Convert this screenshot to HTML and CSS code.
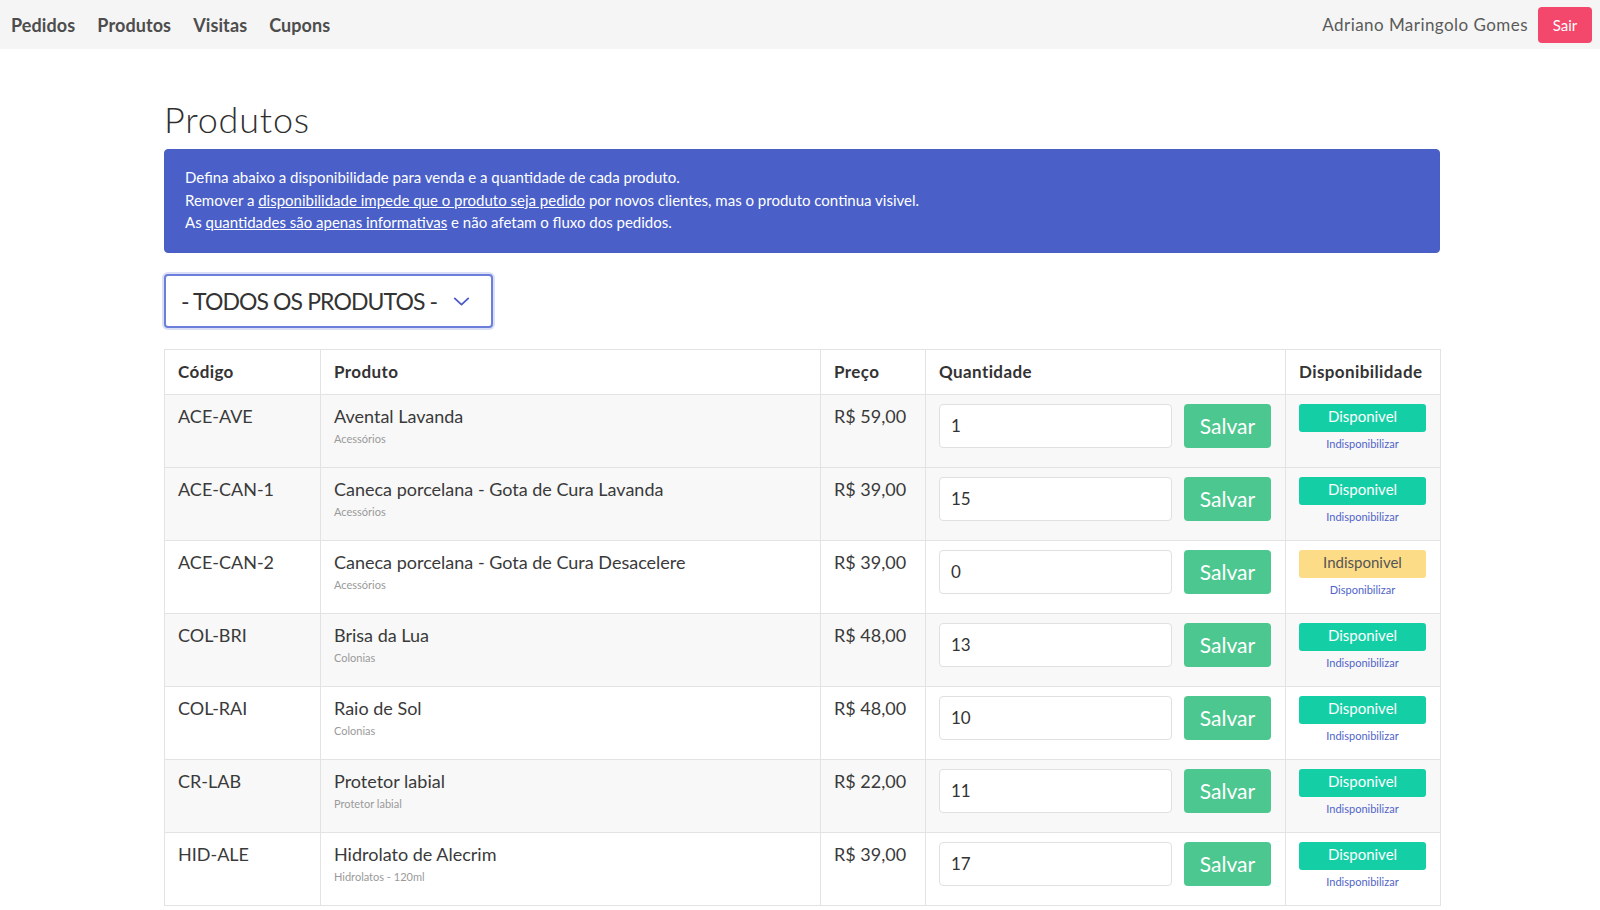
FILE: index.html
```html
<!DOCTYPE html>
<html lang="pt-BR">
<head>
<meta charset="utf-8">
<title>Produtos</title>
<link rel="stylesheet" href="styles.css">
</head>
<body>
<header class="navbar">
  <nav class="nav-links">
    <a href="#">Pedidos</a>
    <a href="#">Produtos</a>
    <a href="#">Visitas</a>
    <a href="#">Cupons</a>
  </nav>
  <div class="nav-user">
    <span class="user-name">Adriano Maringolo Gomes</span>
    <button class="btn-sair">Sair</button>
  </div>
</header>

<main class="container">
  <h1 class="page-title">Produtos</h1>

  <div class="alert">
    <p>Defina abaixo a disponibilidade para venda e a quantidade de cada produto.</p>
    <p>Remover a <a href="#">disponibilidade impede que o produto seja pedido</a> por novos clientes, mas o produto continua visivel.</p>
    <p>As <a href="#">quantidades são apenas informativas</a> e não afetam o fluxo dos pedidos.</p>
  </div>

  <div class="select">
    <span class="select-label">- TODOS OS PRODUTOS -</span>
    <svg class="chevron" width="18" height="10" viewBox="0 0 18 10"><path d="M1.5 1.5 L9 8.5 L16.5 1.5" fill="none" stroke="#4a5cc6" stroke-width="2" stroke-linecap="round" stroke-linejoin="round"/></svg>
  </div>

  <table class="products">
    <colgroup>
      <col class="c-code"><col class="c-prod"><col class="c-price"><col class="c-qty"><col class="c-avail">
    </colgroup>
    <thead>
      <tr><th>Código</th><th>Produto</th><th>Preço</th><th>Quantidade</th><th>Disponibilidade</th></tr>
    </thead>
    <tbody>
      <tr class="gray">
        <td>ACE-AVE</td>
        <td><div class="name">Avental Lavanda</div><div class="sub">Acessórios</div></td>
        <td>R$ 59,00</td>
        <td><div class="qty"><input class="qty-input" value="1"><button class="btn-salvar">Salvar</button></div></td>
        <td><button class="badge on">Disponivel</button><a class="toggle" href="#">Indisponibilizar</a></td>
      </tr>
      <tr class="gray">
        <td>ACE-CAN-1</td>
        <td><div class="name">Caneca porcelana - Gota de Cura Lavanda</div><div class="sub">Acessórios</div></td>
        <td>R$ 39,00</td>
        <td><div class="qty"><input class="qty-input" value="15"><button class="btn-salvar">Salvar</button></div></td>
        <td><button class="badge on">Disponivel</button><a class="toggle" href="#">Indisponibilizar</a></td>
      </tr>
      <tr>
        <td>ACE-CAN-2</td>
        <td><div class="name">Caneca porcelana - Gota de Cura Desacelere</div><div class="sub">Acessórios</div></td>
        <td>R$ 39,00</td>
        <td><div class="qty"><input class="qty-input" value="0"><button class="btn-salvar">Salvar</button></div></td>
        <td><button class="badge off">Indisponivel</button><a class="toggle" href="#">Disponibilizar</a></td>
      </tr>
      <tr class="gray">
        <td>COL-BRI</td>
        <td><div class="name">Brisa da Lua</div><div class="sub">Colonias</div></td>
        <td>R$ 48,00</td>
        <td><div class="qty"><input class="qty-input" value="13"><button class="btn-salvar">Salvar</button></div></td>
        <td><button class="badge on">Disponivel</button><a class="toggle" href="#">Indisponibilizar</a></td>
      </tr>
      <tr>
        <td>COL-RAI</td>
        <td><div class="name">Raio de Sol</div><div class="sub">Colonias</div></td>
        <td>R$ 48,00</td>
        <td><div class="qty"><input class="qty-input" value="10"><button class="btn-salvar">Salvar</button></div></td>
        <td><button class="badge on">Disponivel</button><a class="toggle" href="#">Indisponibilizar</a></td>
      </tr>
      <tr class="gray">
        <td>CR-LAB</td>
        <td><div class="name">Protetor labial</div><div class="sub">Protetor labial</div></td>
        <td>R$ 22,00</td>
        <td><div class="qty"><input class="qty-input" value="11"><button class="btn-salvar">Salvar</button></div></td>
        <td><button class="badge on">Disponivel</button><a class="toggle" href="#">Indisponibilizar</a></td>
      </tr>
      <tr>
        <td>HID-ALE</td>
        <td><div class="name">Hidrolato de Alecrim</div><div class="sub">Hidrolatos - 120ml</div></td>
        <td>R$ 39,00</td>
        <td><div class="qty"><input class="qty-input" value="17"><button class="btn-salvar">Salvar</button></div></td>
        <td><button class="badge on">Disponivel</button><a class="toggle" href="#">Indisponibilizar</a></td>
      </tr>
    </tbody>
  </table>
</main>
</body>
</html>
```

FILE: styles.css
```css
* { box-sizing: border-box; }

html, body {
  margin: 0;
  padding: 0;
  background: #fff;
  font-family: Lato, "Open Sans", "Liberation Sans", sans-serif;
  color: #333;
}

/* Navbar */
.navbar {
  display: flex;
  justify-content: space-between;
  align-items: center;
  height: 49px;
  background: #f5f5f5;
  padding: 0 8px 0 0;
}
.nav-links {
  display: flex;
  align-items: center;
}
.nav-links a {
  padding: 0 11px;
  font-size: 18px;
  font-weight: 700;
  letter-spacing: 0.1px;
  color: #4d4d4d;
  text-decoration: none;
  line-height: 24px;
}
.nav-user {
  display: flex;
  align-items: center;
  gap: 10px;
}
.user-name {
  font-size: 17px;
  letter-spacing: 0.45px;
  color: #5a5a5a;
}
.btn-sair {
  width: 54px;
  height: 36px;
  border: none;
  border-radius: 4px;
  background: #f3476b;
  color: #fff;
  font-family: inherit;
  font-size: 15px;
  padding: 0;
}

/* Main container */
.container {
  width: 1276px;
  margin-left: 164px;
  padding-top: 30px;
}
.page-title {
  margin: 20px 0 10px;
  font-size: 36px;
  font-weight: 300;
  letter-spacing: 0.8px;
  line-height: 40px;
  color: #2f2f2f;
}

.alert {
  background: #4a60c8;
  border: 1px solid #4a5fc2;
  border-radius: 4px;
  padding: 16px 20px 18px;
  color: #fff;
  font-size: 15px;
  line-height: 22.5px;
  margin-bottom: 21px;
}
.alert p { margin: 0; }
.alert a { color: #fff; text-decoration: underline; }

.select {
  width: 329px;
  height: 54px;
  border: 2px solid #6b7fda;
  border-radius: 4px;
  box-shadow: 0 0 0 2px rgba(107, 127, 218, 0.25);
  display: flex;
  align-items: center;
  padding: 0 21px 0 15px;
  gap: 16px;
  margin-bottom: 21px;
  background: #fff;
}
.select-label {
  font-size: 23px;
  letter-spacing: -0.9px;
  color: #333;
  white-space: nowrap;
}
.chevron { flex: none; margin-top: 2px; width: 17px; height: 9px; }

/* Table */
.products {
  width: 1276px;
  border-collapse: collapse;
  table-layout: fixed;
  border: 1px solid #e3e3e3;
}
.c-code { width: 156px; }
.c-prod { width: 500px; }
.c-price { width: 105px; }
.c-qty { width: 360px; }
.c-avail { width: 155px; }

.products th,
.products td {
  border: 1px solid #e3e3e3;
  text-align: left;
  padding-left: 13px;
  padding-right: 13px;
}
.products thead tr { height: 45px; }
.products th {
  font-size: 17px;
  font-weight: 700;
  letter-spacing: 0.4px;
  color: #333;
  vertical-align: middle;
  padding-top: 0;
  padding-bottom: 0;
}
.products tbody tr { height: 73px; }
.products tbody tr.gray { background: #f8f8f8; }
.products td {
  vertical-align: top;
  padding-top: 9px;
  padding-bottom: 0;
  font-size: 18px;
  line-height: 25px;
  color: #3a3a3a;
}
.name { font-size: 18px; line-height: 25px; }
.sub {
  font-size: 11px;
  line-height: 16px;
  color: #9a9a9a;
  margin-top: 2px;
}

.qty {
  display: flex;
  gap: 12px;
  align-items: flex-start;
}
.qty-input {
  width: 233px;
  height: 44px;
  border: 1px solid #e0e0e0;
  border-radius: 4px;
  padding: 0 11px;
  font-family: inherit;
  font-size: 17px;
  color: #333;
  background: #fff;
}
.btn-salvar {
  width: 87px;
  height: 44px;
  border: none;
  border-radius: 4px;
  background: #4cc78f;
  color: #fff;
  font-family: inherit;
  font-size: 21px;
  padding: 0;
}

.badge {
  display: block;
  width: 127px;
  height: 28px;
  border: none;
  border-radius: 3px;
  font-family: inherit;
  font-size: 15px;
  padding: 0 0 3px;
}
.badge.on { background: #14cfa6; color: #fff; }
.badge.off { background: #fddc87; color: #555; }
.toggle {
  display: block;
  width: 127px;
  text-align: center;
  font-size: 11px;
  line-height: 16px;
  margin-top: 4px;
  color: #5064c8;
  text-decoration: none;
}
```
